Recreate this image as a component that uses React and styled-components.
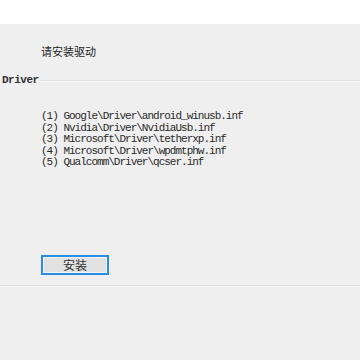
import React from "react";
import styled, { createGlobalStyle } from "styled-components";

const drivers = [
  "Google\\Driver\\android_winusb.inf",
  "Nvidia\\Driver\\NvidiaUsb.inf",
  "Microsoft\\Driver\\tetherxp.inf",
  "Microsoft\\Driver\\wpdmtphw.inf",
  "Qualcomm\\Driver\\qcser.inf",
];

function App() {
  return (
    <>
      <GlobalStyle />
      <Wrapper>
        <TopBar />
        <Title>请安装驱动</Title>
        <Group>
          <GroupHeader>
            <Legend>Driver</Legend>
            <Rule />
          </GroupHeader>
          <List>
            {drivers.map((d, i) => (
              <Item key={d}>
                ({i + 1}) {d}
              </Item>
            ))}
          </List>
          <Actions>
            <Button>安装</Button>
          </Actions>
        </Group>
      </Wrapper>
    </>
  );
}

export default App;

const GlobalStyle = createGlobalStyle`
  html, body {
    margin: 0;
    padding: 0;
    background: #efefef;
  }
`;

const Wrapper = styled.div`
  width: 360px;
  height: 360px;
  overflow: hidden;
  background: #efefef;
  display: flex;
  flex-direction: column;
`;

const TopBar = styled.div`
  height: 24px;
  background: #ffffff;
`;

const Title = styled.div`
  margin: 20px 0 0 41px;
  height: 14px;
  font-family: "Noto Sans CJK SC", sans-serif;
  font-size: 11px;
  line-height: 14px;
  color: #222;
`;

const Group = styled.div`
  margin-top: 16px;
  height: 211px;
  border-bottom: 1px solid #dfdfdf;
  box-shadow: 0 1px 0 #f7f7f7;
  display: flex;
  flex-direction: column;
`;

const GroupHeader = styled.div`
  display: flex;
  align-items: center;
  height: 12px;
`;

const Legend = styled.span`
  padding-left: 2px;
  font-family: "Liberation Mono", monospace;
  font-weight: bold;
  font-size: 11px;
  letter-spacing: -0.5px;
  line-height: 12px;
  color: #333;
`;

const Rule = styled.div`
  flex: 1;
  margin-left: 2px;
  margin-top: 2px;
  border-top: 1px solid #dedede;
  border-bottom: 1px solid #f8f8f8;
`;

const List = styled.div`
  margin: 25px 0 0 41px;
  display: flex;
  flex-direction: column;
`;

const Item = styled.div`
  font-family: "Liberation Mono", monospace;
  font-size: 11px;
  letter-spacing: -1px;
  line-height: 11.5px;
  color: #2a2a2a;
  white-space: pre;
`;

const Actions = styled.div`
  margin: auto 0 10px 41px;
`;

const Button = styled.button`
  width: 68px;
  height: 20px;
  padding: 0;
  background: #e1e1e1;
  border: 2px solid #2b8de4;
  box-shadow: inset 0 0 0 1px #f4f4f4;
  font-family: "Noto Sans CJK SC", sans-serif;
  font-size: 12px;
  line-height: 14px;
  color: #333;
`;
